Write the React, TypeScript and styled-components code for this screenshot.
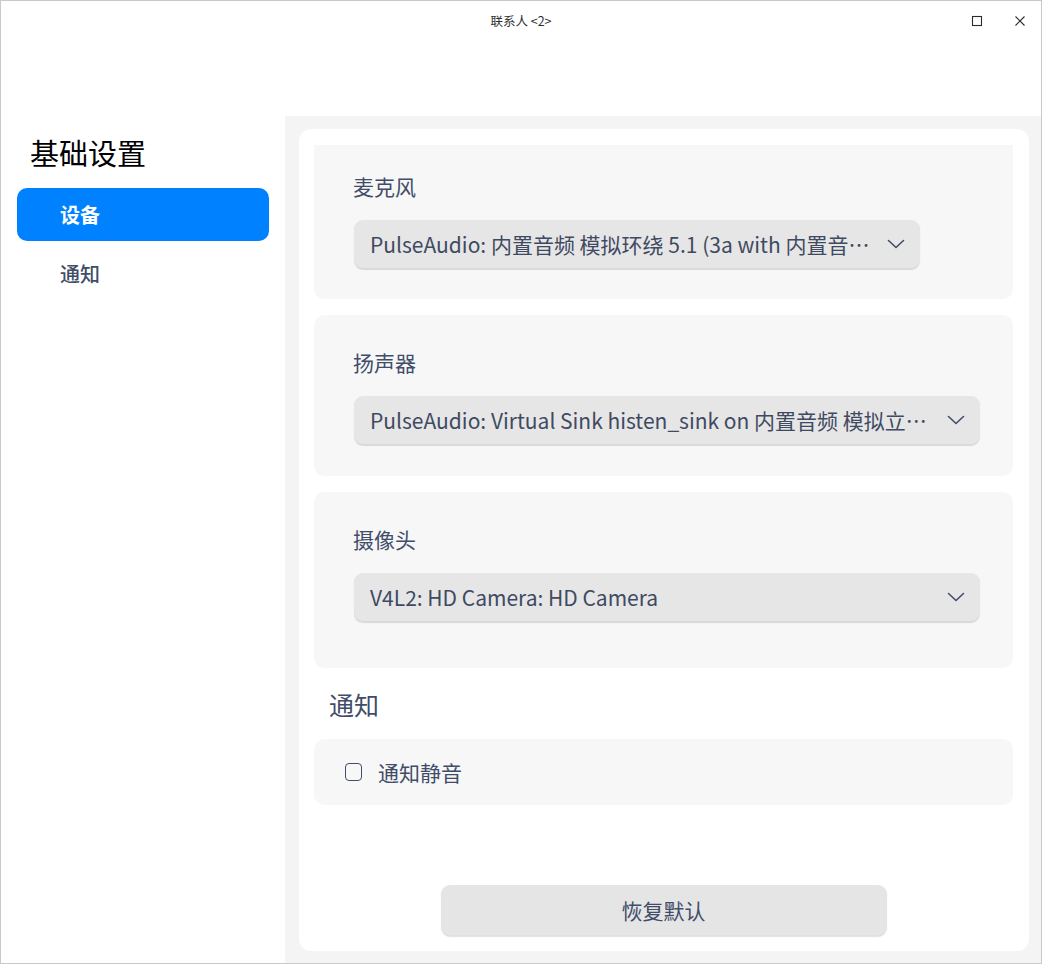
import React, { FC } from 'react'
import styled, { createGlobalStyle } from 'styled-components'

const GlobalStyle = createGlobalStyle`
  html, body {
    margin: 0;
    padding: 0;
    background: #ffffff;
  }
  * {
    box-sizing: border-box;
  }
  body {
    font-family: "Noto Sans CJK SC", "Noto Sans", sans-serif;
  }
`

type Device = {
  label: string
  value: string
  width: number
  padTop: number
  padBottom: number
  clipped?: boolean
}

const devices: Device[] = [
  {
    label: '麦克风',
    value: 'PulseAudio: 内置音频 模拟环绕 5.1 (3a with 内置音…',
    width: 566,
    padTop: 27,
    padBottom: 31,
    clipped: true,
  },
  {
    label: '扬声器',
    value: 'PulseAudio: Virtual Sink histen_sink on 内置音频 模拟立…',
    width: 626,
    padTop: 33,
    padBottom: 32,
  },
  {
    label: '摄像头',
    value: 'V4L2: HD Camera: HD Camera',
    width: 626,
    padTop: 33,
    padBottom: 47,
  },
]

const Chevron: FC = () => (
  <svg width="18" height="10" viewBox="0 0 18 10" fill="none">
    <path d="M1.5 1.5 L9 8.5 L16.5 1.5" stroke="#414d68" strokeWidth="1.6" strokeLinecap="round" strokeLinejoin="round" />
  </svg>
)

const MaxIcon: FC = () => (
  <svg width="12" height="12" viewBox="0 0 12 12" fill="none">
    <rect x="1.5" y="1.5" width="9" height="9" stroke="#2b2b2b" strokeWidth="1.1" />
  </svg>
)

const CloseIcon: FC = () => (
  <svg width="12" height="12" viewBox="0 0 12 12" fill="none">
    <path d="M1.5 1.5 L10.5 10.5 M10.5 1.5 L1.5 10.5" stroke="#2b2b2b" strokeWidth="1.1" />
  </svg>
)

const App: FC = () => {
  return (
    <>
      <GlobalStyle />
      <Window>
        <TitleBar>
          <Title>联系人 &lt;2&gt;</Title>
          <WindowButtons>
            <WindowButton><MaxIcon /></WindowButton>
            <WindowButton><CloseIcon /></WindowButton>
          </WindowButtons>
        </TitleBar>
        <Body>
          <Sidebar>
            <SidebarHeading>基础设置</SidebarHeading>
            <NavItem $active>设备</NavItem>
            <NavItem>通知</NavItem>
          </Sidebar>
          <Pane>
            <Card>
              {devices.map((d) => (
                <Group key={d.label} $padTop={d.padTop} $padBottom={d.padBottom} $clipped={d.clipped}>
                  <FieldLabel>{d.label}</FieldLabel>
                  <Combo $width={d.width}>
                    <ComboText>{d.value}</ComboText>
                    <Chevron />
                  </Combo>
                </Group>
              ))}
              <SectionHeading>通知</SectionHeading>
              <CheckGroup>
                <CheckBox />
                <CheckText>通知静音</CheckText>
              </CheckGroup>
              <Footer>
                <ResetButton>恢复默认</ResetButton>
              </Footer>
            </Card>
          </Pane>
        </Body>
      </Window>
    </>
  )
}

const Window = styled.div`
  width: 1042px;
  height: 964px;
  border: 1px solid #c9c9c9;
  background: #ffffff;
  display: flex;
  flex-direction: column;
  overflow: hidden;
`

const TitleBar = styled.div`
  position: relative;
  height: 50px;
  flex-shrink: 0;
  display: flex;
  align-items: flex-start;
  justify-content: center;
`

const Title = styled.div`
  margin-top: 11px;
  font-size: 12.5px;
  line-height: 18px;
  color: #303030;
`

const WindowButtons = styled.div`
  position: absolute;
  top: 6px;
  right: 0;
  display: flex;
`

const WindowButton = styled.div`
  width: 43px;
  height: 28px;
  display: flex;
  align-items: center;
  justify-content: center;
`

const Body = styled.div`
  flex: 1;
  display: flex;
  min-height: 0;
`

const Sidebar = styled.div`
  width: 284px;
  flex-shrink: 0;
  padding: 81px 16px 0 16px;
  display: flex;
  flex-direction: column;
`

const SidebarHeading = styled.div`
  margin-left: 13px;
  margin-bottom: 16px;
  font-size: 29px;
  line-height: 40px;
  color: #000000;
`

const NavItem = styled.div<{ $active?: boolean }>`
  height: 53px;
  margin-bottom: 6px;
  padding-left: 43px;
  display: flex;
  align-items: center;
  border-radius: 10px;
  font-size: 20px;
  font-weight: ${({ $active }) => ($active ? 700 : 500)};
  background: ${({ $active }) => ($active ? '#0081ff' : 'transparent')};
  color: ${({ $active }) => ($active ? '#ffffff' : '#414d68')};
`

const Pane = styled.div`
  flex: 1;
  margin-top: 65px;
  background: #f4f4f4;
  padding: 13px 12px 12px 14px;
  display: flex;
`

const Card = styled.div`
  flex: 1;
  background: #ffffff;
  border-radius: 12px;
  padding: 16px 16px 16px 15px;
  display: flex;
  flex-direction: column;
`

const Group = styled.div<{ $padTop: number; $padBottom: number; $clipped?: boolean }>`
  background: #f7f7f7;
  border-radius: ${({ $clipped }) => ($clipped ? '0 0 10px 10px' : '10px')};
  padding: ${({ $padTop, $padBottom }) => `${$padTop}px 0 ${$padBottom}px 39px`};
  margin-bottom: 16px;
  display: flex;
  flex-direction: column;
  gap: 20px;
`

const FieldLabel = styled.div`
  font-size: 21px;
  line-height: 28px;
  color: #414d68;
`

const Combo = styled.div<{ $width: number }>`
  width: ${({ $width }) => $width}px;
  height: 48px;
  margin-left: 1px;
  padding: 0 15px 0 16px;
  display: flex;
  align-items: center;
  justify-content: space-between;
  background: #e6e6e6;
  border-radius: 9px;
  box-shadow: 0 1.5px 1px rgba(0, 0, 0, 0.12);
`

const ComboText = styled.span`
  font-size: 21px;
  color: #3f4a62;
  white-space: nowrap;
`

const SectionHeading = styled.div`
  margin: 4px 0 19px 15px;
  font-size: 25px;
  line-height: 32px;
  color: #414d68;
`

const CheckGroup = styled.div`
  height: 66px;
  background: #f7f7f7;
  border-radius: 10px;
  padding-left: 31px;
  display: flex;
  align-items: center;
  gap: 16px;
`

const CheckBox = styled.span`
  width: 17px;
  height: 18px;
  border: 1.6px solid #414d68;
  border-radius: 4px;
  background: transparent;
`

const CheckText = styled.span`
  font-size: 21px;
  color: #414d68;
`

const Footer = styled.div`
  margin-top: auto;
  display: flex;
  justify-content: center;
`

const ResetButton = styled.div`
  width: 446px;
  height: 50px;
  display: flex;
  align-items: center;
  justify-content: center;
  background: #e5e5e5;
  border-radius: 9px;
  box-shadow: 0 1.5px 1px rgba(0, 0, 0, 0.12);
  font-size: 21px;
  color: #414d68;
`

export default App
